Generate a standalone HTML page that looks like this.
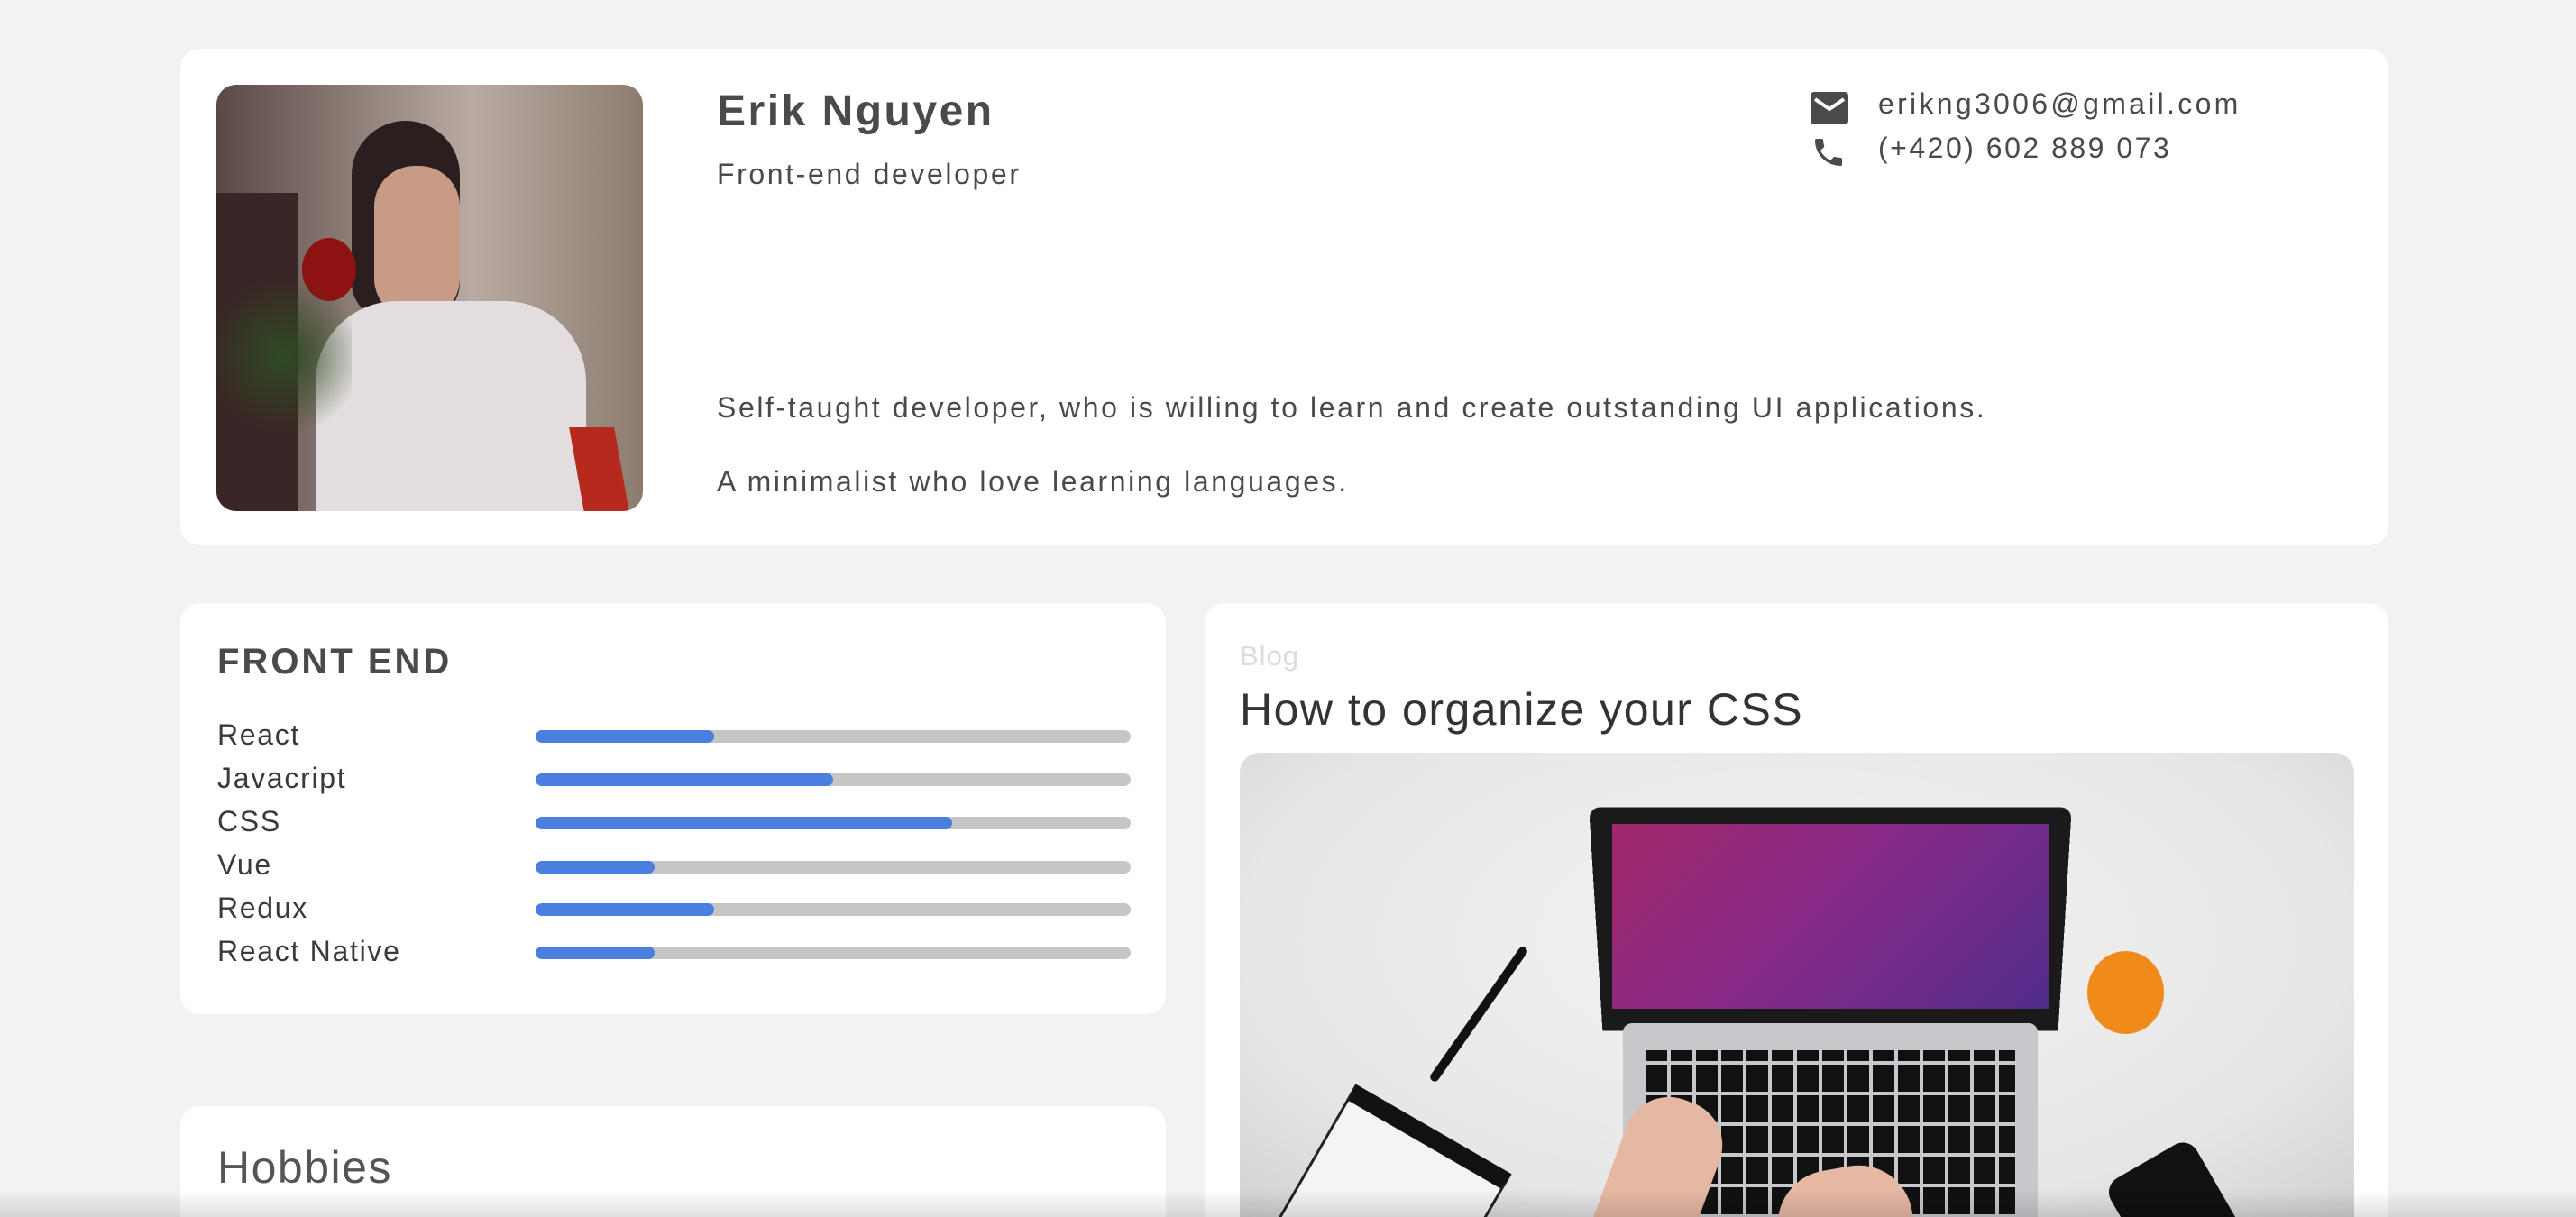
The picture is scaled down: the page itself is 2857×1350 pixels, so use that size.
<!DOCTYPE html>
<html><head><meta charset="utf-8"><style>
*{margin:0;padding:0;box-sizing:border-box}
html,body{width:2857px;height:1350px;overflow:hidden}
body{background:#f2f2f2;font-family:"Liberation Sans",sans-serif;color:#4a4a4a;position:relative}
.card{position:absolute;background:#fff;border-radius:22px}
.abs{position:absolute;white-space:nowrap}
.bar{position:absolute;left:594px;width:660px;height:14px;border-radius:7px;background:#c6c6c6;overflow:hidden}
.bar i{display:block;height:100%;background:#4a7fe0;border-radius:7px}
.lbl{position:absolute;left:241px;font-size:32px;color:#3a3a3a;letter-spacing:1.7px}
.p{letter-spacing:2.6px}
</style></head><body>

<div class="card" style="left:200px;top:54px;width:2449px;height:551px"></div>
<div class="abs" style="left:240px;top:94px;width:473px;height:473px;border-radius:22px;overflow:hidden;background:linear-gradient(90deg,#5a4846 0%,#8a7a74 30%,#b9aba3 60%,#8c7c70 100%)">
  <div style="position:absolute;left:0;top:120px;width:90px;height:360px;background:#3a2626"></div>
  <div style="position:absolute;left:150px;top:40px;width:120px;height:220px;border-radius:60px 60px 40px 40px;background:#2a1f1e"></div>
  <div style="position:absolute;left:175px;top:90px;width:95px;height:170px;border-radius:45px;background:#c99b86"></div>
  <div style="position:absolute;left:110px;top:240px;width:300px;height:240px;border-radius:90px 90px 0 0;background:#e4dde0"></div>
  <div style="position:absolute;left:95px;top:170px;width:60px;height:70px;border-radius:50%;background:#8e1212"></div>
  <div style="position:absolute;left:0;top:200px;width:150px;height:200px;background:radial-gradient(circle,#2f4a22 0%,rgba(47,74,34,0) 70%)"></div>
  <div style="position:absolute;left:400px;top:380px;width:50px;height:100px;background:#b52a1c;transform:skewX(10deg)"></div>
</div>

<div class="abs" style="left:795px;top:96px;font-size:48px;font-weight:bold;color:#4a4a4a;letter-spacing:2.5px">Erik Nguyen</div>
<div class="abs p" style="left:795px;top:175px;font-size:32px;color:#4a4a4a">Front-end developer</div>
<div class="abs p" style="left:795px;top:434px;font-size:32px;color:#4a4a4a">Self-taught developer, who is willing to learn and create outstanding UI applications.</div>
<div class="abs p" style="left:795px;top:516px;font-size:32px;color:#4a4a4a">A minimalist who love learning languages.</div>

<svg class="abs" style="left:2008px;top:102px" width="42" height="36" viewBox="0 0 42 36"><rect x="0" y="0" width="42" height="36" rx="4" fill="#4a4a4a"/><path d="M5 8 L21 19 L37 8" stroke="#fff" stroke-width="4" fill="none"/></svg>
<svg class="abs" style="left:2008px;top:148px" width="40" height="42" viewBox="0 0 24 24"><path fill="#4a4a4a" d="M6.6 10.8c1.4 2.8 3.8 5.1 6.6 6.6l2.2-2.2c.3-.3.7-.4 1-.2 1.1.4 2.3.6 3.6.6.6 0 1 .4 1 1V20c0 .6-.4 1-1 1C10.6 21 3 13.4 3 4c0-.6.4-1 1-1h3.5c.6 0 1 .4 1 1 0 1.3.2 2.5.6 3.6.1.3 0 .7-.2 1L6.6 10.8z"/></svg>
<div class="abs" style="left:2083px;top:97px;font-size:32px;color:#4a4a4a;letter-spacing:3.3px">erikng3006@gmail.com</div>
<div class="abs" style="left:2083px;top:146px;font-size:32px;color:#4a4a4a;letter-spacing:2.5px">(+420) 602 889 073</div>

<div class="card" style="left:200px;top:669px;width:1093px;height:456px"></div>
<div class="abs" style="left:241px;top:712px;font-size:40px;font-weight:bold;color:#4a4a4a;letter-spacing:3px">FRONT END</div>
<div class="lbl" style="top:797px">React</div><div class="bar" style="top:810px"><i style="width:30%"></i></div>
<div class="lbl" style="top:845px">Javacript</div><div class="bar" style="top:858px"><i style="width:50%"></i></div>
<div class="lbl" style="top:893px">CSS</div><div class="bar" style="top:906px"><i style="width:70%"></i></div>
<div class="lbl" style="top:941px">Vue</div><div class="bar" style="top:955px"><i style="width:20%"></i></div>
<div class="lbl" style="top:989px">Redux</div><div class="bar" style="top:1002px"><i style="width:30%"></i></div>
<div class="lbl" style="top:1037px">React Native</div><div class="bar" style="top:1050px"><i style="width:20%"></i></div>

<div class="card" style="left:200px;top:1227px;width:1093px;height:123px;border-radius:22px 22px 0 0"></div>
<div class="abs" style="left:241px;top:1266px;font-size:50px;font-weight:300;color:#555;letter-spacing:1.5px">Hobbies</div>

<div class="card" style="left:1336px;top:669px;width:1313px;height:681px;border-radius:22px 22px 0 0"></div>
<div class="abs" style="left:1375px;top:710px;font-size:31px;color:#dcdcdc;letter-spacing:1px">Blog</div>
<div class="abs" style="left:1375px;top:758px;font-size:50px;color:#333;letter-spacing:1.5px">How to organize your CSS</div>
<div class="abs" style="left:1375px;top:835px;width:1236px;height:515px;border-radius:22px 22px 0 0;overflow:hidden;background:radial-gradient(ellipse at 50% 40%,#f4f4f4 0%,#e6e6e6 70%,#d2d2d2 100%)">
  <div style="position:absolute;left:395px;top:63px;width:520px;height:250px;background:#1a1a1a;border-radius:12px 12px 0 0;transform:perspective(600px) rotateX(-8deg)"></div>
  <div style="position:absolute;left:413px;top:79px;width:484px;height:205px;background:linear-gradient(135deg,#a0286a 0%,#8a2a88 45%,#512c8a 100%)"></div>
  <div style="position:absolute;left:425px;top:300px;width:460px;height:320px;background:#c8c8cc;border-radius:10px"></div>
  <div style="position:absolute;left:450px;top:330px;width:410px;height:250px;background:repeating-linear-gradient(90deg,#111 0 24px,#c8c8cc 24px 28px)"></div>
  <div style="position:absolute;left:450px;top:330px;width:410px;height:250px;background:repeating-linear-gradient(0deg,transparent 0 30px,#c8c8cc 30px 34px)"></div>
  <div style="position:absolute;left:405px;top:380px;width:110px;height:220px;background:#e6b8a4;border-radius:50px;transform:rotate(20deg)"></div>
  <div style="position:absolute;left:600px;top:460px;width:150px;height:160px;background:#e6b8a4;border-radius:60px;transform:rotate(-10deg)"></div>
  <div style="position:absolute;left:940px;top:220px;width:85px;height:92px;background:#f08a1a;border-radius:50%"></div>
  <div style="position:absolute;left:260px;top:200px;width:10px;height:180px;background:#111;transform:rotate(35deg);border-radius:5px"></div>
  <div style="position:absolute;left:50px;top:400px;width:200px;height:260px;background:#f4f4f4;border:3px solid #222;border-top:20px solid #111;transform:rotate(30deg)"></div>
  <div style="position:absolute;left:1000px;top:440px;width:110px;height:200px;background:#111;border-radius:18px;transform:rotate(-30deg)"></div>
</div>

<div class="abs" style="left:0;top:1320px;width:2857px;height:30px;background:linear-gradient(180deg,rgba(0,0,0,0) 0%,rgba(0,0,0,0.12) 100%)"></div>
</body></html>
